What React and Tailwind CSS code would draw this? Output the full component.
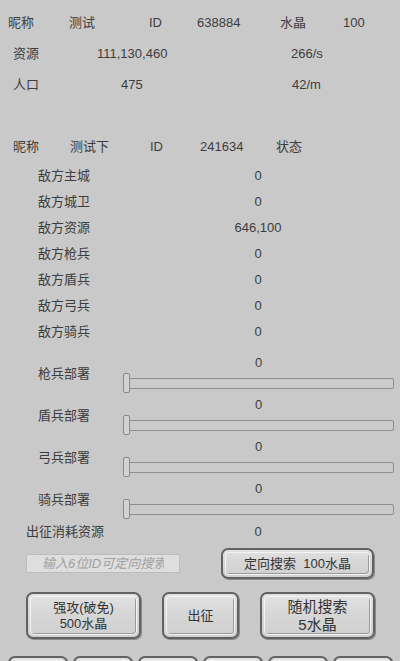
import { useState } from 'react'

const ENEMY = [
  ['敌方主城', '0'],
  ['敌方城卫', '0'],
  ['敌方资源', '646,100'],
  ['敌方枪兵', '0'],
  ['敌方盾兵', '0'],
  ['敌方弓兵', '0'],
  ['敌方骑兵', '0'],
]

const DEPLOY = ['枪兵部署', '盾兵部署', '弓兵部署', '骑兵部署']

function BevelButton({ className = '', children }) {
  return (
    <button
      type="button"
      className={`rounded-[7px] border-2 border-[#626262] bg-gradient-to-b from-[#e2e2e2] via-[#d6d6d6] to-[#cfcfcf] p-[2px] shadow-[1px_1px_0_#8a8a8a] ${className}`}
    >
      <div className="flex h-full w-full flex-col items-center justify-center rounded-[4px] border border-[#f4f4f4] text-[13px] leading-[16px] text-[#333] shadow-[inset_-1px_-1px_0_#9a9a9a]">
        {children}
      </div>
    </button>
  )
}

function Track() {
  return (
    <div className="relative flex h-[20px] items-center">
      <div className="h-[11px] flex-1 rounded-[2px] border border-[#8e8e8e] bg-[#cbcbcb]" />
      <div className="absolute left-0 top-0 h-[20px] w-[7px] rounded-[2px] border border-[#8a8a8a] bg-[#d2d2d2]" />
    </div>
  )
}

export default function App() {
  const [id, setId] = useState('')

  return (
    <div
      className="h-[661px] w-[400px] overflow-hidden bg-[#c9c9c9] text-[13px] text-[#3d3d3d]"
      style={{ fontFamily: '"Liberation Sans", "Noto Sans CJK SC", sans-serif' }}
    >
      {/* Player */}
      <div className="pt-[7px]">
        <div className="flex h-[31px] items-center pl-[8px]">
          <span className="w-[61px]">昵称</span>
          <span className="w-[80px]">测试</span>
          <span className="w-[48px]">ID</span>
          <span className="w-[83px]">638884</span>
          <span className="w-[63px]">水晶</span>
          <span>100</span>
        </div>
        <div className="flex h-[31px] items-center pl-[13px]">
          <span className="w-[84px]">资源</span>
          <span className="w-[194px]">111,130,460</span>
          <span>266/s</span>
        </div>
        <div className="flex h-[31px] items-center pl-[13px]">
          <span className="w-[108px]">人口</span>
          <span className="w-[171px]">475</span>
          <span>42/m</span>
        </div>
      </div>

      {/* Target */}
      <div className="mt-[34px] flex h-[26px] items-center pl-[13px]">
        <span className="w-[57px]">昵称</span>
        <span className="w-[80px]">测试下</span>
        <span className="w-[50px]">ID</span>
        <span className="w-[76px]">241634</span>
        <span>状态</span>
      </div>

      <div className="mt-[3px]">
        {ENEMY.map(([label, value]) => (
          <div key={label} className="flex h-[26px] items-center pl-[38px]">
            <span className="w-[180px]">{label}</span>
            <span className="w-[80px] text-center">{value}</span>
          </div>
        ))}
      </div>

      {/* Deploy sliders */}
      <div className="mt-[10px] flex flex-col gap-[4px]">
        {DEPLOY.map((label) => (
          <div key={label} className="flex items-center pl-[38px] pr-[6px]">
            <span className="w-[85px]">{label}</span>
            <div className="flex flex-1 flex-col gap-[2px]">
              <div className="h-[16px] text-center leading-[16px]">0</div>
              <Track />
            </div>
          </div>
        ))}
      </div>

      <div className="flex h-[25px] items-center pl-[26px]">
        <span className="w-[192px]">出征消耗资源</span>
        <span className="w-[80px] text-center">0</span>
      </div>

      {/* Search */}
      <div className="mt-[4px] flex items-center pl-[26px]">
        <input
          value={id}
          onChange={(e) => setId(e.target.value)}
          placeholder="输入6位ID可定向搜索"
          className="h-[19px] w-[154px] border border-[#bdbdbd] bg-[#dedede] px-[15px] text-[13px] italic text-[#555] outline-none placeholder:text-[#a0a0a0]"
        />
        <BevelButton className="ml-[41px] h-[31px] w-[153px]">定向搜索&nbsp;&nbsp;100水晶</BevelButton>
      </div>

      <div className="mt-[13px] flex items-start pl-[26px]">
        <BevelButton className="h-[47px] w-[115px]">
          <span>强攻(破免)</span>
          <span>500水晶</span>
        </BevelButton>
        <BevelButton className="ml-[21px] h-[47px] w-[77px]">出征</BevelButton>
        <BevelButton className="ml-[21px] h-[47px] w-[115px]">
          <span className="text-[15px] leading-[18px]">随机搜索</span>
          <span className="text-[15px] leading-[18px]">5水晶</span>
        </BevelButton>
      </div>

      {/* Bottom tabs, cut off by the screen edge */}
      <div className="mt-[17px] flex gap-[5px] pl-[8px]">
        {[0, 1, 2, 3, 4, 5].map((i) => (
          <BevelButton key={i} className="h-[40px] w-[60px]" />
        ))}
      </div>
    </div>
  )
}
